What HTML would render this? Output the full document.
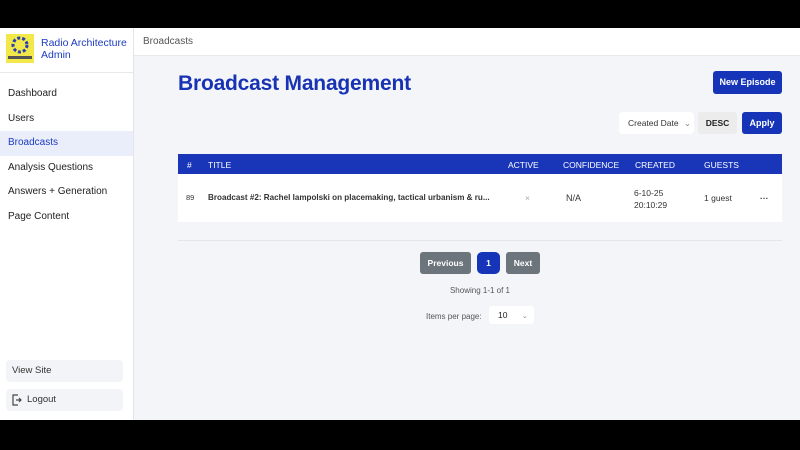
<!DOCTYPE html><html><head><style>
*{box-sizing:border-box;margin:0;padding:0}
body{width:800px;height:450px;background:#000;font-family:"Liberation Sans",sans-serif;position:relative;overflow:hidden}
.app{position:absolute;top:28px;left:0;width:800px;height:392px;background:#f4f5f9}
.side{position:absolute;left:0;top:0;width:134px;height:392px;background:#fff;border-right:1px solid #e3e5ea}
.logo{height:45px;border-bottom:1px solid #e6e8ec;position:relative}
.lg{position:absolute;left:6px;top:6px;width:28px;height:29px;background:#f3e84a}
.lt{position:absolute;left:41px;top:9px;font-size:10.5px;color:#1d3bc0;line-height:12px}
.nav div{height:24.5px;line-height:24.5px;padding-left:8px;font-size:10px;color:#222}
.nav .on{background:#eaeefa;color:#1d3bc0}
.btm{position:absolute;left:6px;width:117px;height:22px;background:#f3f4f7;border-radius:4px;font-size:9.5px;color:#333;line-height:22px;padding-left:6px}
.top{position:absolute;left:134px;top:0;right:0;height:28px;background:#fff;border-bottom:1px solid #e6e8ec;font-size:10px;color:#555;padding:8px 0 0 9px}
h1{position:absolute;left:178px;top:72px;font-size:21px;color:#1733b3;font-weight:900;letter-spacing:-0.2px}
.bb{position:absolute;background:#1634b8;color:#fff;font-weight:bold;font-size:9px;border-radius:3px;text-align:center}
.th{position:absolute;left:178px;top:126px;width:604px;height:20px;background:#1a36b8;color:#fff;font-size:8.5px}
.th span,.tr span{position:absolute;top:6px}
.tr{position:absolute;left:178px;top:146px;width:604px;height:48px;background:#fff;font-size:8.5px;color:#333}
.tr span{top:19px}
</style></head><body><div class="app">
<div class="side"><div class="logo"><div class="lg"><svg width="28" height="29"><circle cx="14" cy="11" r="7" fill="none" stroke="#2840b0" stroke-width="3" stroke-dasharray="3 2"/><rect x="2" y="22" width="24" height="3" fill="#555"/></svg></div><div class="lt">Radio Architecture<br>Admin</div></div>
<div class="nav" style="margin-top:9px"><div>Dashboard</div><div>Users</div><div class="on">Broadcasts</div><div>Analysis Questions</div><div>Answers + Generation</div><div>Page Content</div></div>
<div class="btm" style="top:332px">View Site</div>
<div class="btm" style="top:361px;padding-left:21px"><svg style="position:absolute;left:6px;top:5px" width="10" height="12"><path d="M6 1H1v10h5M4 6h5M7 4l2 2-2 2" fill="none" stroke="#444" stroke-width="1.2"/></svg>Logout</div>
</div>
<div class="top">Broadcasts</div>
<h1 style="top:44px">Broadcast Management</h1>
<div class="bb" style="left:713px;top:43px;width:69px;height:23px;line-height:23px">New Episode</div>
<div style="position:absolute;left:619px;top:84px;width:75px;height:22px;background:#fff;border-radius:4px;font-size:8.5px;color:#333;line-height:22px;padding-left:9px">Created Date <span style="color:#888;margin-left:3px">⌄</span></div>
<div style="position:absolute;left:698px;top:84px;width:39px;height:22px;background:#ececec;border-radius:3px;font-size:8.5px;font-weight:bold;line-height:22px;text-align:center;color:#222">DESC</div>
<div class="bb" style="left:742px;top:84px;width:40px;height:22px;line-height:22px">Apply</div>
<div class="th"><span style="left:9px">#</span><span style="left:30px">TITLE</span><span style="left:330px">ACTIVE</span><span style="left:385px">CONFIDENCE</span><span style="left:457px">CREATED</span><span style="left:526px">GUESTS</span></div>
<div class="tr"><span style="left:8px;font-size:7.5px">89</span><span style="left:30px;font-weight:bold;font-size:8.1px">Broadcast #2: Rachel lampolski on placemaking, tactical urbanism &amp; ru...</span><span style="left:347px;color:#aaa">×</span><span style="left:388px;font-size:9px">N/A</span><span style="left:456px;top:13px;line-height:12px">6-10-25<br>20:10:29</span><span style="left:526px">1 guest</span><span style="left:582px;font-weight:bold">···</span></div>
<div style="position:absolute;left:178px;top:212px;width:604px;border-top:1px solid #e3e5ea"></div>
<div style="position:absolute;left:420px;top:224px;width:51px;height:22px;background:#6c747c;color:#fff;border-radius:3px;font-size:8.5px;font-weight:bold;text-align:center;line-height:22px">Previous</div>
<div style="position:absolute;left:477px;top:224px;width:23px;height:22px;background:#1634b8;color:#fff;border-radius:5px;font-size:8.5px;font-weight:bold;text-align:center;line-height:22px">1</div>
<div style="position:absolute;left:506px;top:224px;width:34px;height:22px;background:#6c747c;color:#fff;border-radius:3px;font-size:8.5px;font-weight:bold;text-align:center;line-height:22px">Next</div>
<div style="position:absolute;left:0;width:960px;top:258px;font-size:8px;color:#555;text-align:center">Showing 1-1 of 1</div>
<div style="position:absolute;left:426px;top:284px;font-size:8px;color:#555">Items per page:</div>
<div style="position:absolute;left:489px;top:278px;width:45px;height:18px;background:#fff;border-radius:3px;font-size:8.5px;line-height:18px;padding-left:9px;color:#222">10 <span style="color:#888;margin-left:12px;font-size:7px">⌄</span></div>
</div></body></html>
